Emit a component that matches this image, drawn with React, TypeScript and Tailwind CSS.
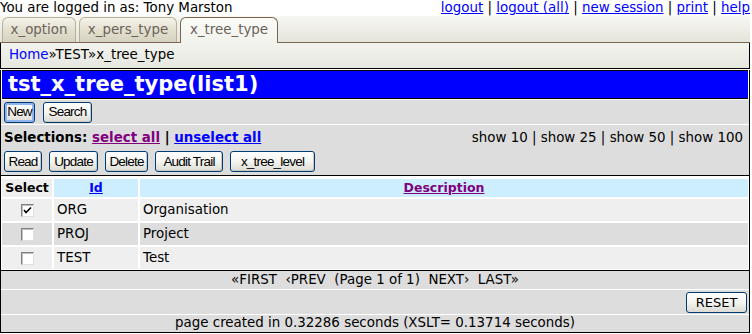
import React from 'react';

const Btn: React.FC<{ label: string; w: string; focus?: boolean }> = ({ label, w, focus }) => (
  <button
    className={`${w} h-[21px] rounded-[3px] border border-[#003c74] bg-gradient-to-b from-[#ffffff] via-[#f4f4f0] to-[#dcdcd4] text-[13.5px] tracking-[-0.8px] leading-none text-black font-['Liberation_Sans',sans-serif] ${
      focus ? 'shadow-[inset_0_0_0_2px_#8fb4f0]' : 'shadow-[inset_-1px_-1px_0_#c8c8c0]'
    }`}
  >
    {label}
  </button>
);

const Check: React.FC<{ on?: boolean }> = ({ on }) => (
  <span className="inline-flex w-[13px] h-[13px] items-center justify-center bg-white border-t border-l border-t-[#808080] border-l-[#808080] border-b border-r border-b-[#e0e0e0] border-r-[#e0e0e0] shadow-[inset_1px_1px_0_#c0c0c0]">
    {on && (
      <svg width="9" height="9" viewBox="0 0 9 9">
        <path d="M1 4 L3 6.5 L8 1.5" stroke="#000" strokeWidth="1.6" fill="none" />
      </svg>
    )}
  </span>
);

const rows = [
  { id: 'ORG', desc: 'Organisation', on: true, bg: 'bg-[#efefef]' },
  { id: 'PROJ', desc: 'Project', on: false, bg: 'bg-[#dddddd]' },
  { id: 'TEST', desc: 'Test', on: false, bg: 'bg-[#efefef]' },
];

export default function App() {
  return (
    <div className="w-[750px] h-[334px] bg-white text-black text-[13.4px] font-['DejaVu_Sans','Verdana',sans-serif] overflow-hidden">
      {/* logged in line */}
      <div className="h-[16px] flex justify-between items-center leading-none">
        <span>You are logged in as: Tony Marston</span>
        <span>
          <a className="text-[#0000ff] underline">logout</a> | <a className="text-[#0000ff] underline">logout (all)</a> |{' '}
          <a className="text-[#0000ff] underline">new session</a> | <a className="text-[#0000ff] underline">print</a> |{' '}
          <a className="text-[#0000ff] underline">help</a>
        </span>
      </div>

      {/* tabs */}
      <div className="h-[27px] flex items-end pl-[2px] gap-[3px] bg-gradient-to-b from-[#f7f7f3] to-[#e5e4da] border-b border-[#7a6650]">
        <div className="w-[74px] h-[25px] flex items-center justify-center rounded-t-[6px] border border-b-0 border-[#b8b098] bg-gradient-to-b from-[#f4f3ec] via-[#e4e0d0] to-[#d6d2c0] text-[#6a6258]">
          x_option
        </div>
        <div className="w-[98px] h-[25px] flex items-center justify-center rounded-t-[6px] border border-b-0 border-[#b8b098] bg-gradient-to-b from-[#f4f3ec] via-[#e4e0d0] to-[#d6d2c0] text-[#6a6258]">
          x_pers_type
        </div>
        <div className="w-[98px] h-[26px] -mb-px flex items-center justify-center rounded-t-[6px] border border-b-0 border-[#7a6650] bg-gradient-to-b from-[#fbfbf8] to-[#f2f2ec] text-[#6a6258]">
          x_tree_type
        </div>
      </div>

      {/* breadcrumb */}
      <div className="h-[26px] flex items-center px-[8px] border-x border-b border-black bg-gradient-to-b from-[#f2f3ee] to-[#e6e7df]">
        <a className="text-[#0000ff]">Home</a>»TEST»x_tree_type
      </div>

      {/* main panel */}
      <div className="mt-[1px] border-x border-b border-black">
        <div className="h-[29px] mx-[1px] border-y border-black bg-[#0000ff] text-white font-bold text-[21px] flex items-center px-[6px] leading-none">
          tst_x_tree_type(list1)
        </div>
        <div className="h-[1px] bg-white" />
        <div className="h-[24px] bg-[#dddddd] flex items-center gap-[8px] px-[3px]">
          <Btn label="New" w="w-[31px]" focus />
          <Btn label="Search" w="w-[49px]" />
        </div>
        <div className="h-[1px] bg-white" />
        <div className="h-[50px] bg-[#dddddd] flex flex-col">
          <div className="h-[26px] flex items-center justify-between px-[3px]">
            <span className="font-bold text-[13.4px]">
              Selections: <a className="text-[#800080] underline">select all</a> |{' '}
              <a className="text-[#0000ff] underline">unselect all</a>
            </span>
            <span className="pr-[3px]">show 10 | show 25 | show 50 | show 100</span>
          </div>
          <div className="flex items-center gap-[7px] px-[3px]">
            <Btn label="Read" w="w-[38px]" />
            <Btn label="Update" w="w-[49px]" />
            <Btn label="Delete" w="w-[43px]" />
            <Btn label="Audit Trail" w="w-[68px]" />
            <Btn label="x_tree_level" w="w-[85px]" />
          </div>
        </div>

        {/* table */}
        <div className="border-y border-black bg-white px-[1px] pt-[3px] pb-[1px] flex flex-col gap-[2px]">
          <div className="h-[18px] flex gap-[2px] font-bold text-[12.5px]">
            <div className="w-[50px] flex items-center justify-center bg-[#efefef]">Select</div>
            <div className="w-[84px] flex items-center justify-center bg-[#cceeff]">
              <a className="text-[#0000ff] underline">Id</a>
            </div>
            <div className="flex-1 flex items-center justify-center bg-[#cceeff]">
              <a className="text-[#800080] underline">Description</a>
            </div>
          </div>
          {rows.map((r) => (
            <div key={r.id} className="h-[22px] flex gap-[2px]">
              <div className={`w-[50px] flex items-center justify-center ${r.bg}`}>
                <Check on={r.on} />
              </div>
              <div className={`w-[84px] flex items-center px-[3px] ${r.bg}`}>{r.id}</div>
              <div className={`flex-1 flex items-center px-[3px] ${r.bg}`}>{r.desc}</div>
            </div>
          ))}
        </div>

        <div className="h-[18px] bg-[#dddddd] flex items-center justify-center whitespace-pre">
          «FIRST  ‹PREV  (Page 1 of 1)  NEXT›  LAST»
        </div>
        <div className="h-[1px] bg-white" />
        <div className="h-[24px] bg-[#dddddd] flex items-center justify-end px-[2px]">
          <button className="w-[61px] h-[21px] rounded-[3px] border border-[#003c74] bg-gradient-to-b from-[#ffffff] via-[#f4f4f0] to-[#dcdcd4] text-[13px] leading-none">
            RESET
          </button>
        </div>
        <div className="h-[1px] bg-white" />
        <div className="h-[17px] bg-[#dddddd] flex items-center justify-center">
          page created in 0.32286 seconds (XSLT= 0.13714 seconds)
        </div>
      </div>
    </div>
  );
}
